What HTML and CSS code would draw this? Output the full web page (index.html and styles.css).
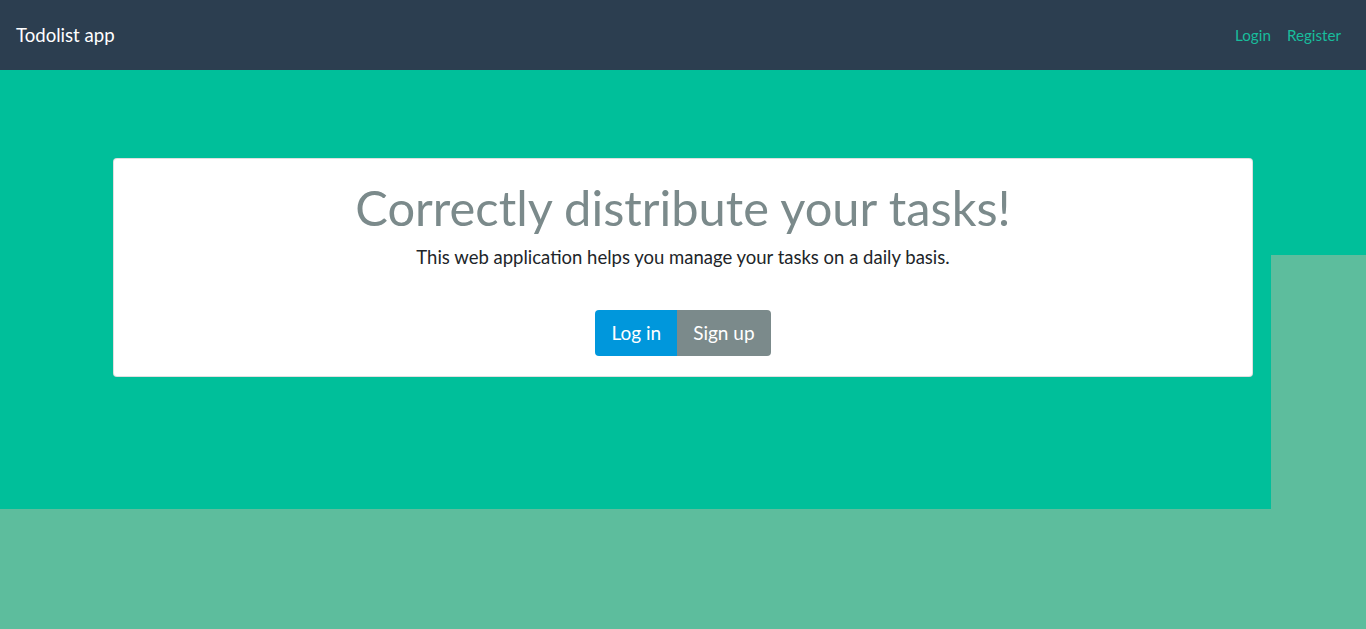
FILE: index.html
```html
<!DOCTYPE html>
<html lang="en">
<head>
<meta charset="utf-8">
<title>Todolist app</title>
<link rel="stylesheet" href="styles.css">
</head>
<body>
<nav class="navbar">
  <a class="brand" href="#">Todolist app</a>
  <div class="nav-links">
    <a href="#">Login</a>
    <a href="#">Register</a>
  </div>
</nav>
<section class="hero">
  <div class="card">
    <h1 class="title">Correctly distribute your tasks!</h1>
    <p class="lead">This web application helps you manage your tasks on a daily basis.</p>
    <div class="btn-group">
      <a class="btn btn-primary" href="#">Log in</a>
      <a class="btn btn-secondary" href="#">Sign up</a>
    </div>
  </div>
</section>
</body>
</html>
```
FILE: styles.css
```css
* { box-sizing: border-box; }
html, body { margin: 0; padding: 0; }
body {
  font-family: Lato, "Open Sans", sans-serif;
  background: #5dbd9d;
  min-height: 629px;
}
a { text-decoration: none; }
.navbar {
  height: 70px;
  background: #2c3e50;
  display: flex;
  align-items: center;
  justify-content: space-between;
  padding: 0 25px 0 16px;
}
.brand {
  color: #fff;
  font-size: 18.6px;
}
.nav-links {
  display: flex;
  gap: 16px;
}
.nav-links a {
  color: #18bc9c;
  font-size: 15.2px;
}
.hero {
  height: 439px;
  padding-top: 88px;
  background:
    linear-gradient(#00bf9a, #00bf9a) 0 0 / 100% 185px no-repeat,
    linear-gradient(#00bf9a, #00bf9a) 0 0 / 1271px 100% no-repeat;
}
.card {
  width: 1140px;
  margin: 0 auto;
  background: #fff;
  border: 1px solid rgba(0,0,0,0.125);
  border-radius: 4px;
  padding: 19px 16px 20px;
  text-align: center;
}
.title {
  margin: 0;
  font-weight: 400;
  font-size: 48.8px;
  line-height: 1.2;
  color: #7b8a8b;
}
.lead {
  margin: 7px 0 39px;
  font-size: 18.5px;
  line-height: 1.5;
  color: #212529;
}
.btn-group {
  display: inline-flex;
}
.btn {
  display: inline-block;
  font-size: 19px;
  line-height: 30px;
  padding: 8px 16px;
  color: #fff;
}
.btn-primary {
  background: #0097dc;
  border-radius: 4px 0 0 4px;
}
.btn-secondary {
  background: #7b8a8b;
  border-radius: 0 4px 4px 0;
}
```
